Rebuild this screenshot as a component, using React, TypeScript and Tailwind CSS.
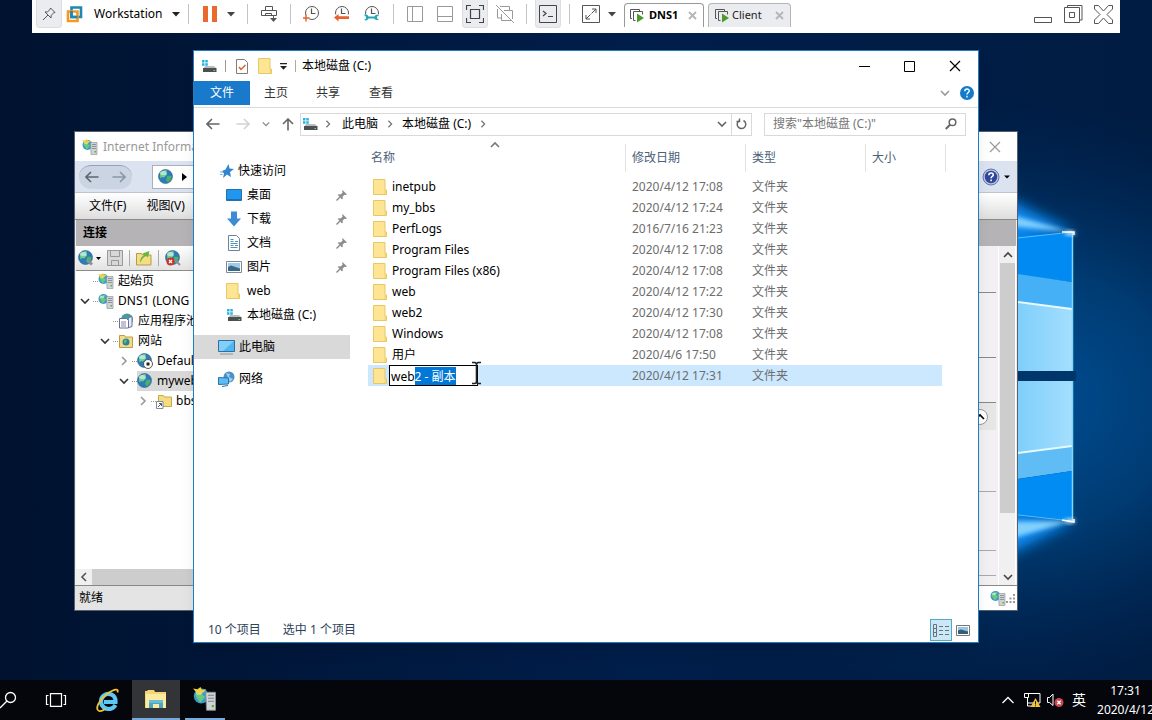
import { useEffect, useRef } from "react";
import type { ReactNode } from "react";

interface IconProps {
  className?: string;
}

function Caret({ className = "text-[#444]" }: IconProps) {
  return (
    <svg width="8" height="5" viewBox="0 0 8 5" className={`shrink-0 ${className}`}>
      <path d="M0 0h8L4 4.6z" fill="currentColor" />
    </svg>
  );
}

function Chevron({ className = "" }: IconProps) {
  return (
    <svg
      width="10"
      height="10"
      viewBox="0 0 10 10"
      fill="none"
      stroke="currentColor"
      className={`shrink-0 ${className}`}
    >
      <path d="M1 3l4 4 4-4" strokeWidth="1.6" />
    </svg>
  );
}

function CloseIcon({ size = 12 }: { size?: number }) {
  return (
    <svg width={size} height={size} viewBox="0 0 12 12" stroke="currentColor" fill="none">
      <path d="M1 1l10 10M11 1L1 11" strokeWidth="1.2" />
    </svg>
  );
}

function TabCloseIcon() {
  return (
    <svg width="9" height="9" viewBox="0 0 9 9" stroke="currentColor" fill="none">
      <path d="M1 1l7 7M8 1L1 8" strokeWidth="1.8" />
    </svg>
  );
}

function FolderIcon() {
  return (
    <svg width="14" height="16" viewBox="0 0 14 16" className="shrink-0">
      <path d="M.5.5h11.5v10.500h1.500v4.500H.5z" fill="#fde593" stroke="#e8c765" />
      <path d="M11.500 15v-3.500h1.500V15z" fill="#f6d675" />
    </svg>
  );
}

function DriveIcon() {
  return (
    <svg width="16" height="14" viewBox="0 0 16 14" className="shrink-0">
      <path d="M1 1h2.5v2.5H1zM4.3 1h2.5v2.5H4.3zM1 4.3h2.5v2.5H1zM4.3 4.3h2.5v2.5H4.3z" fill="#27b5dc" />
      <path d="M4 7h9l2.5 2.5h-13z" fill="#b9bdc0" />
      <path d="M2 9h13.5v4H2z" fill="#4b5054" />
      <path d="M12.5 11h1.5v1h-1.5z" fill="#6fdc7a" />
    </svg>
  );
}

function Globe({ size = 16, children }: { size?: number; children?: ReactNode }) {
  return (
    <svg width={size} height={size} viewBox="0 0 16 16" className="shrink-0">
      <circle cx="7.5" cy="7.5" r="7" fill="#2b7cb8" stroke="#2b5f80" strokeWidth=".6" />
      <path d="M2 4.5C4 1.500 7 .8 9 1.500L7.500 4l1.500 1.500L6 8.500 4 8 2.500 9.500z" fill="#74d08c" />
      <path d="M9.500 6.500l4 .5c0 3-1.500 5-3.500 6.500L8 11z" fill="#4bb06c" />
      <ellipse cx="5.500" cy="4" rx="3.500" ry="2" fill="#e0f8fa" opacity=".6" />
      {children}
    </svg>
  );
}

function ServerIcon({ size = 16, star = true }: { size?: number; star?: boolean }) {
  return (
    <svg width={size} height={size} viewBox="0 0 16 16" className="shrink-0">
      <circle cx="5.500" cy="6" r="5" fill="#3a9bcb" />
      <path d="M1.500 5C3 2 6 1.500 7.500 2.500L6 5l2 1.500L5 10.500 3 8z" fill="#6cc97a" />
      <ellipse cx="4" cy="4" rx="2" ry="1.200" fill="#e0f8fa" opacity=".6" />
      {star && <path d="M0 1l3 .5L5 0l1 2 3-.5-2 2-4 1z" fill="#f5cf3d" />}
      <path d="M8.500 3.500h6.500V15.500H9z" fill="#ced3d5" stroke="#858d90" strokeWidth=".6" />
      <path d="M10 5.500h4M10 7.500h4M10 9.500h4" stroke="#7c8487" strokeWidth=".8" />
      <path d="M12.500 12h1.500v1.500h-1.500z" fill="#69a83c" />
    </svg>
  );
}

function PinIcon() {
  return (
    <svg width="11" height="11" viewBox="0 0 11 11" className="shrink-0 text-[#8c8c8c]">
      <path d="M6.500 0L11 4.500l-1.200.5L8.500 4.700 6.500 6.700l.3 2L6 9.500 1.800 5l.8-.8 2 .3 2-2L6.200 1z" fill="currentColor" />
      <path d="M4 7L.5 10.500" stroke="currentColor" strokeWidth="1.400" />
    </svg>
  );
}

function StarIcon() {
  return (
    <svg width="14" height="14" viewBox="0 0 14 14" className="shrink-0">
      <path d="M8.500 0l1 4.500L14 5l-4 3 1 5-4-2.500L3 14l1-4.500L2 7l3.500-1.500z" fill="#2f86cf" />
      <path d="M0 8h3M0 10.500h2.500" stroke="#6fb1e4" />
    </svg>
  );
}

function DesktopIcon() {
  return (
    <svg width="16" height="12" viewBox="0 0 16 12" className="shrink-0">
      <path d="M.5.5h15v11H.5z" fill="#2196ef" stroke="#2472ad" />
      <path d="M1 10h14v1H1z" fill="#156fbd" />
    </svg>
  );
}

function DownloadIcon() {
  return (
    <svg width="16" height="16" viewBox="0 0 16 16" className="shrink-0">
      <path d="M5 .5h6v7h4L8 15.500 1 7.500h4z" fill="#3c8bd4" />
    </svg>
  );
}

function DocumentIcon() {
  return (
    <svg width="16" height="16" viewBox="0 0 16 16" className="shrink-0">
      <path d="M2.500.5h8l3 3v12h-11z" fill="#fff" stroke="#6d8494" />
      <path d="M4.500 4.500h3M9 6.500h3M4.500 6.500h3M4.500 8.500h7M4.500 10.500h3M9 10.500h3M4.500 12.500h7" stroke="#4c90bf" />
    </svg>
  );
}

function PictureIcon() {
  return (
    <svg width="16" height="12" viewBox="0 0 16 12" className="shrink-0">
      <path d="M.5.5h15v11H.5z" fill="#fff" stroke="#7f8b94" />
      <path d="M2 2h12v8H2z" fill="#9fcbe8" />
      <path d="M2 6l3-1.500 9 3V10H2z" fill="#3c6888" />
    </svg>
  );
}

function ComputerIcon() {
  return (
    <svg width="17" height="15" viewBox="0 0 17 15" className="shrink-0">
      <path d="M.5.5h16v11H.5z" fill="#4fb5f3" stroke="#2c6fa0" />
      <path d="M1 1h15L5 11H1z" fill="#83cff8" />
      <path d="M2 14h13" stroke="#8195a3" />
    </svg>
  );
}

function NetworkIcon() {
  return (
    <svg width="17" height="16" viewBox="0 0 17 16" className="shrink-0">
      <circle cx="11" cy="6" r="5.500" fill="#4f91c5" />
      <path d="M8 2l4 1-1 3 4 2-3 3z" fill="#9fd0ee" />
      <path d="M.5 6.500l10 .5v6l-10 .5z" fill="#5dbcf5" stroke="#2d74a8" />
      <path d="M4 15.500l6-1" stroke="#2d74a8" />
    </svg>
  );
}

function Divider({ className = "" }: IconProps) {
  return <div className={`h-5 w-px shrink-0 bg-[#c4c4c4] ${className}`} />;
}

function ClockIcon({ badge }: { badge: "add" | "revert" | "manage" }) {
  return (
    <svg width="18" height="18" viewBox="0 0 18 18" fill="none" className="shrink-0">
      <circle cx="9" cy="8" r="6.500" stroke="#555" />
      <path d="M8.500 3.500V8.500h4" stroke="#555" strokeWidth="1.200" />
      {badge === "add" && (
        <>
          <path d="M0 10h6v7H0z" fill="#fff" />
          <path d="M3 9.500v7M0 13h6.500" stroke="#e2622a" strokeWidth="1.400" />
        </>
      )}
      {badge === "revert" && (
        <>
          <path d="M0 9.500h18V18H0z" fill="#fff" />
          <path d="M1 12.500L5.500 9v2.200H16v2.800H5.500v2.500z" fill="#e8602c" />
        </>
      )}
      {badge === "manage" && (
        <>
          <path d="M0 9.500h18V18H0z" fill="#fff" />
          <path d="M1 10c2-1 4 0 4.500 1.500h6c1-2 3-2 4.500-1l-2 1v2l2 1c-2 1-4 .5-4.800-1H5.500C4.500 15.500 3 16 1 15l2-1.200v-2z" fill="#22a7b8" />
        </>
      )}
    </svg>
  );
}

function VmTabIcon() {
  return (
    <svg width="16" height="15" viewBox="0 0 16 15" fill="none" className="shrink-0">
      <path d="M3 10.500H1.500v-9h9V3" stroke="#555" />
      <path d="M6.500 12.500h-2v-9h9v3" stroke="#555" />
      <path d="M8 5.500l7 4.500-7 4.500z" fill="#4c9a2a" />
    </svg>
  );
}

function WorkstationBar() {
  return (
    <header className="relative z-30 mx-8 flex h-[33px] shrink-0 items-start bg-white">
      <div className="flex h-7 items-center">
        <button aria-label="Pin" className="ml-1 flex h-7 w-[26px] items-center justify-center rounded-b border border-t-0 border-[#dcdde2] bg-[#ebecf0]">
          <svg width="14" height="14" viewBox="0 0 14 14" fill="none" stroke="#555">
            <path d="M8.500 1l4.500 4.500-1.500.5-2.300 2.300L9 11 3 5l2.700-.2L8 2.500zM6 8L1 13" />
          </svg>
        </button>
        <svg width="17" height="17" viewBox="0 0 17 17" fill="none" strokeWidth="2.600" className="ml-1 shrink-0">
          <path d="M5.500 1.500h9.500v9.500H5.500z" stroke="#1f86b5" />
          <path d="M2 5.500h9.500V15H2z" stroke="#f19a1f" />
          <path d="M5.500 5v6h6" stroke="#1f86b5" />
        </svg>
        <button className="ml-[11px] flex w-[86px] items-center justify-between text-black">
          Workstation
          <Caret className="text-[#222]" />
        </button>
        <Divider className="ml-2" />
        <button aria-label="Suspend" className="ml-[14px] flex gap-1">
          <span className="h-4 w-[5px] bg-[#ea6a2c]" />
          <span className="h-4 w-[5px] bg-[#ea6a2c]" />
        </button>
        <button aria-label="Power options" className="ml-[10px]">
          <Caret />
        </button>
        <Divider className="ml-3" />
        <button aria-label="Send keys" className="ml-3">
          <svg width="18" height="18" viewBox="0 0 18 18" fill="none" stroke="#555">
            <path d="M5.500 5.500v-4h7v4M1.500 5.500h15v5h-15zM5.500 10.500v-2h6v2M13.500 10.500v5" />
            <path d="M10 13h7l-3.500 4z" fill="#555" stroke="none" />
          </svg>
        </button>
        <Divider className="ml-3" />
        <div className="ml-3 flex gap-3">
          <button aria-label="Take snapshot"><ClockIcon badge="add" /></button>
          <button aria-label="Revert snapshot"><ClockIcon badge="revert" /></button>
          <button aria-label="Manage snapshots"><ClockIcon badge="manage" /></button>
        </div>
        <Divider className="ml-3" />
        <button aria-label="Show library" className="ml-[13px]">
          <svg width="16" height="16" viewBox="0 0 16 16" fill="none" stroke="#999">
            <path d="M.5.5h15v15H.5zM5.500.5v15" />
          </svg>
        </button>
        <button aria-label="Show thumbnails" className="ml-[14px]">
          <svg width="16" height="16" viewBox="0 0 16 16" fill="none" stroke="#999">
            <path d="M.5.500h15v15H.5zM.5 10.500h15" />
          </svg>
        </button>
        <button aria-label="Full screen" className="ml-[9px] flex h-7 w-[26px] items-center justify-center rounded-b border border-t-0 border-[#dcdde2] bg-[#ebecf0]">
          <svg width="18" height="18" viewBox="0 0 18 18" fill="none" stroke="#444">
            <path d="M.500 5V.5H5M13 .5h4.500V5M17.500 13v4.500H13M5 17.500H.5V13M4.500 4.500h9v9h-9z" strokeWidth="1.200" />
          </svg>
        </button>
        <button aria-label="Unity" className="ml-2">
          <svg width="18" height="18" viewBox="0 0 18 18" fill="none" stroke="#999">
            <path d="M4 1.500h9.500V5M1.500 4v9H5M5.500 9v6.500h9.500M8 5.500h8.500V14M0 0l18 18" />
          </svg>
        </button>
        <Divider className="ml-3" />
        <button aria-label="Console view" className="ml-2 flex h-7 w-[26px] items-center justify-center rounded-b border border-t-0 border-[#dcdde2] bg-[#ebecf0]">
          <svg width="18" height="18" viewBox="0 0 18 18" fill="none" stroke="#444">
            <path d="M.5.5h17v17H.5z" />
            <path d="M4 6l3 2.500L4 11M9 11.500h5" strokeWidth="1.200" />
          </svg>
        </button>
        <Divider className="ml-2" />
        <button aria-label="Stretch" className="ml-3">
          <svg width="18" height="18" viewBox="0 0 18 18" fill="none" stroke="#555">
            <path d="M.5.5h17v17H.5zM4 10v4h4M10 4h4v4M4 14l4.500-4.500M14 4L9.500 8.500" />
          </svg>
        </button>
        <button aria-label="Stretch options" className="ml-2">
          <Caret />
        </button>
      </div>
      <div className="ml-2 flex gap-1 pt-[3px]">
        <div className="flex h-6 w-20 items-center rounded-t border border-b-0 border-[#999] bg-white pl-1">
          <VmTabIcon />
          <button className="ml-1 text-[11px] font-bold text-black">DNS1</button>
          <button aria-label="Close DNS1" className="ml-auto mr-1.5 text-[#b5b5b5]">
            <TabCloseIcon />
          </button>
        </div>
        <div className="flex h-6 w-[83px] items-center rounded-t border border-b-0 border-[#b5b5b5] bg-[#ebecf0] pl-[5px]">
          <VmTabIcon />
          <button className="ml-0.5 text-[11px] text-[#222]">Client</button>
          <button aria-label="Close Client" className="ml-auto mr-1.5 text-[#b5b5b5]">
            <TabCloseIcon />
          </button>
        </div>
      </div>
      <div className="ml-auto flex h-7 items-center gap-[11px] pr-[7px] text-[#555]">
        <button aria-label="Minimize">
          <svg width="19" height="19" viewBox="0 0 19 19" fill="none" stroke="currentColor">
            <path d="M.5 12.500h17v5H.5z" />
          </svg>
        </button>
        <button aria-label="Restore">
          <svg width="19" height="19" viewBox="0 0 19 19" fill="none" stroke="currentColor">
            <path d="M.5 2.500h15v15H.5zM3.500 2.500v-2h14.500V15h-2.500M5.500 7.500h5v5h-5z" />
          </svg>
        </button>
        <button aria-label="Close">
          <svg width="19" height="19" viewBox="0 0 19 19" fill="none" stroke="currentColor">
            <path d="M.5.500h4l5 5.500 5-5.500h4v3.500L13 9.500l5.500 5.500v3.500h-4l-5-5.500-5 5.500h-4V15L6 9.500.5 4z" />
          </svg>
        </button>
      </div>
    </header>
  );
}

function Wallpaper() {
  return (
    <svg className="absolute inset-0 h-full w-full" viewBox="0 0 1152 720" preserveAspectRatio="none">
      <defs>
        <linearGradient id="base" x1="0" x2="1">
          <stop offset="0" stopColor="#00122f" />
          <stop offset=".55" stopColor="#001e4a" />
          <stop offset="1" stopColor="#001c42" />
        </linearGradient>
        <radialGradient id="glow" cx="0" cy="0" r="1" gradientUnits="userSpaceOnUse" gradientTransform="translate(1000 400) scale(400 300)">
          <stop offset="0" stopColor="#00529c" />
          <stop offset=".45" stopColor="#003f78" stopOpacity=".9" />
          <stop offset="1" stopColor="#002a5a" stopOpacity="0" />
        </radialGradient>
        <linearGradient id="pane" x1="0" x2="1">
          <stop offset="0" stopColor="#78cdfb" />
          <stop offset="1" stopColor="#a5defe" />
        </linearGradient>
        <filter id="soft" x="-30%" y="-60%" width="160%" height="220%">
          <feGaussianBlur stdDeviation="7" />
        </filter>
        <filter id="beam" x="-30%" y="-60%" width="160%" height="220%">
          <feGaussianBlur stdDeviation="2" />
        </filter>
      </defs>
      <path d="M0 0h1152v720H0z" fill="url(#base)" />
      <path d="M0 0h1152v720H0z" fill="url(#glow)" />
      <path d="M950 170l124 62-124 24zM950 585l124-64-124-24z" fill="#0a8cf5" filter="url(#soft)" />
      <path d="M1010 236l62-3v49l-62-8z" fill="#008af2" />
      <path d="M1010 273l62 9v27l-62-8z" fill="#45b0f6" />
      <path d="M1010 301l62 8v62h-62z" fill="url(#pane)" />
      <path d="M1010 371h66v10h-66z" fill="#00366a" />
      <path d="M1010 381h62v66l-62 7z" fill="url(#pane)" />
      <path d="M1010 454l62-8v25l-62 9z" fill="#5fbcf5" />
      <path d="M1010 480l62-9v49l-62-6z" fill="#008cf2" />
      <path d="M1000 212l72 20-72-7zM1000 542l72-21-72 1z" fill="#9fe2ff" opacity=".8" filter="url(#beam)" />
      <path d="M1018 238l54-6M1010 514l62 7" stroke="#4cc0ff" />
      <path d="M1010 301l62 8M1010 454l62-8" stroke="#e6f9ff" strokeWidth="2" />
      <path d="M1072.500 232v139M1072.500 381v140" stroke="#7ed8f8" strokeWidth="1.500" />
      <ellipse cx="1070" cy="233" rx="5" ry="2" fill="#f2fdff" filter="url(#beam)" />
      <ellipse cx="1070" cy="521" rx="5" ry="2" fill="#f2fdff" filter="url(#beam)" />
      <path d="M1062 232l12 0v3M1062 520l12 2v-3" stroke="#fff" fill="none" strokeWidth="1.500" />
    </svg>
  );
}

interface TreeRowProps {
  label: string;
  icon: ReactNode;
  indent: string;
  state?: "open" | "closed";
  selected?: boolean;
}

function TreeRow({ label, icon, indent, state, selected }: TreeRowProps) {
  return (
    <li className={`flex h-5 items-center ${indent}`}>
      <span className="flex w-[13px] shrink-0 items-center">
        {state === "open" && <Chevron className="text-[#333]" />}
        {state === "closed" && <Chevron className="-rotate-90 text-[#999]" />}
      </span>
      <span className="w-[5px] shrink-0 border-t border-dotted border-[#999]" />
      <button className={`flex h-full grow items-center gap-1 whitespace-nowrap text-black ${selected ? "bg-[#d9d9d9]" : ""}`}>
        {icon}
        {label}
      </button>
    </li>
  );
}

function IisWindow() {
  return (
    <section className="absolute top-[131px] right-[134px] bottom-[109px] left-[74px] flex flex-col overflow-hidden border border-[#56606c] bg-[#f0f0f0]">
      <div className="flex h-[29px] shrink-0 items-center bg-white pr-4 pl-[7px] text-[#999]">
        <ServerIcon />
        <h2 className="ml-[5px] grow">Internet Information Services</h2>
        <button aria-label="Close manager">
          <CloseIcon />
        </button>
      </div>
      <div className="flex h-8 shrink-0 items-center border-b border-[#c0c4cc] bg-[#dce3f0] pr-[7px] pl-1">
        <div className="flex h-6 w-[53px] items-center justify-between rounded-full border-t border-[#97a3b5] bg-[#cbd4e3] px-1.5 text-[#8b97a5]">
          <button aria-label="Back" className="text-[#5d6773]">
            <ArrowIcon />
          </button>
          <button aria-label="Forward" className="rotate-180">
            <ArrowIcon />
          </button>
        </div>
        <div className="mx-5 flex h-6 grow items-center gap-2 border border-[#a8b0bd] bg-white pl-[5px]">
          <Globe />
          <svg width="5" height="8" viewBox="0 0 5 8">
            <path d="M0 0l5 4-5 4z" fill="#000" />
          </svg>
        </div>
        <button aria-label="Manager help" className="flex items-center gap-1">
          <svg width="18" height="18" viewBox="0 0 18 18" className="text-[#2e469c]">
            <circle cx="9" cy="9" r="8" fill="#b9c4e4" stroke="#6675a8" />
            <circle cx="9" cy="9" r="6.200" fill="currentColor" />
            <path d="M6.800 7.300c0-3 4.500-3 4.500-.3 0 1.500-2.200 1.500-2.200 3.300M9.100 11.600v1.600" fill="none" stroke="#fff" strokeWidth="1.600" />
          </svg>
          <svg width="6" height="4" viewBox="0 0 6 4">
            <path d="M0 .500h6L3 3.500z" fill="#000" />
          </svg>
        </button>
      </div>
      <nav className="flex h-[27px] shrink-0 items-center gap-5 border-b border-[#888] bg-gradient-to-b from-white to-[#dedede] pl-3.5 text-black">
        <button>文件(F)</button>
        <button>视图(V)</button>
      </nav>
      <div className="mx-px flex min-h-0 grow">
        <aside className="flex w-52 shrink-0 flex-col border-r border-[#888] bg-white">
          <h3 className="flex h-[26px] shrink-0 items-center bg-[#b5b3b5] pl-[7px] font-bold text-black">连接</h3>
          <div className="flex h-[25px] shrink-0 items-center border-b border-[#8c8c8c] bg-gradient-to-b from-white to-[#e3e3e3]">
            <button aria-label="Connect" className="flex items-center gap-0.5 pl-0.5">
              <Globe>
                <path d="M9 10l5 4.500" stroke="#8a8f93" strokeWidth="3" />
              </Globe>
              <svg width="5" height="3" viewBox="0 0 5 3">
                <path d="M0 0h5L2.500 3z" fill="#000" />
              </svg>
            </button>
            <button aria-label="Save" className="ml-1.5">
              <svg width="16" height="16" viewBox="0 0 16 16" fill="#d8d8d8" stroke="#999">
                <path d="M.5.500h15v15H.5zM3.500.500h9v6h-9zM4.500 10.500h7v5h-7z" />
              </svg>
            </button>
            <div className="mx-1.5 h-4 w-px bg-[#aaa]" />
            <button aria-label="Up one level">
              <svg width="16" height="16" viewBox="0 0 16 16">
                <path d="M.5 3.500h5l1 1.500h8.500v10H.5z" fill="#f3de86" stroke="#b59b45" />
                <path d="M4 13c0-4 1-6.500 4-7.500L6.500 3.500l7-2.500-1.500 6.500-1.800-1.500C7 7 6 9.500 4 13z" fill="#6cb53c" />
              </svg>
            </button>
            <div className="mx-1.5 h-4 w-px bg-[#aaa]" />
            <button aria-label="Disconnect">
              <Globe>
                <path d="M10 10l5 5" stroke="#8a8f93" strokeWidth="2" />
                <circle cx="5.500" cy="11.500" r="4" fill="#c8342e" />
                <path d="M4 10l3 3M7 10l-3 3" stroke="#fff" strokeWidth="1.200" />
              </Globe>
            </button>
          </div>
          <ul className="min-h-0 grow overflow-hidden">
            <TreeRow label="起始页" indent="pl-1" icon={<ServerIcon />} />
            <TreeRow label="DNS1 (LONG" indent="pl-1" state="open" icon={<ServerIcon star={false} />} />
            <TreeRow
              label="应用程序池"
              indent="pl-6"
              icon={
                <svg width="16" height="16" viewBox="0 0 16 16" className="shrink-0">
                  <circle cx="9" cy="6.500" r="6" fill="#4a9c9c" />
                  <path d="M1.500 5.500h7l2 2v7.500h-9z" fill="#fff" stroke="#67719e" />
                  <path d="M3 9h5M3 11h5M3 13h5" stroke="#8f7fae" />
                  <path d="M11 4.500l3-1v10l-3 1" fill="#e8eef4" stroke="#67719e" />
                </svg>
              }
            />
            <TreeRow
              label="网站"
              indent="pl-6"
              state="open"
              icon={
                <svg width="16" height="16" viewBox="0 0 16 16" className="shrink-0">
                  <path d="M1.500 2.500h5l1 1.500h7v10.500h-13z" fill="#f2dd86" stroke="#b89c45" />
                  <circle cx="8" cy="9" r="3.500" fill="#2b7fa6" />
                  <path d="M5.500 8L8 6l1 2-2 3z" fill="#61bb5e" />
                </svg>
              }
            />
            <TreeRow
              label="Default"
              indent="pl-[43px]"
              state="closed"
              icon={
                <Globe>
                  <circle cx="11" cy="11" r="4.500" fill="#fff" stroke="#555" />
                  <path d="M9.500 9.500h3v3h-3z" fill="#222" />
                </Globe>
              }
            />
            <TreeRow label="myweb" indent="pl-[43px]" state="open" selected icon={<Globe />} />
            <TreeRow
              label="bbs"
              indent="pl-[62px]"
              state="closed"
              icon={
                <svg width="16" height="16" viewBox="0 0 16 16" className="shrink-0">
                  <path d="M2.500 2.500h5l1 1.500h7v9.500h-13z" fill="#f5dc82" stroke="#c9a84a" />
                  <path d="M.5 8.500h6.500v7H.5z" fill="#fff" stroke="#888" />
                  <path d="M2 14l3-3M3 10.500h2.500V13" fill="none" stroke="#2b5fa5" />
                </svg>
              }
            />
          </ul>
          <div className="flex h-4 shrink-0 bg-[#cdcdcd]">
            <button aria-label="Scroll left" className="flex w-4 items-center justify-center bg-[#f0f0f0] text-[#555]">
              <Chevron className="rotate-90" />
            </button>
          </div>
        </aside>
        <main className="flex min-w-0 grow flex-col bg-[#f2f0f2]">
          <div className="h-[26px] shrink-0 bg-[#b5b3b5]" />
          <div className="flex min-h-0 grow">
            <div className="mr-px min-w-0 grow border-r border-white">
              <div className="mr-0.5 h-[47px] border-b border-[#888]" />
              <div className="mr-0.5 h-[65px] border-b border-[#888]" />
              <div className="mr-0.5 h-[45px] border-b border-[#888]" />
              <div className="mr-0.5 flex h-[27px] items-center justify-end bg-[#e6e6e6] pr-2">
                <button aria-label="Collapse" className="flex size-4 items-center justify-center rounded-full border border-[#999] bg-white">
                  <Chevron className="rotate-180" />
                </button>
              </div>
              <div className="mr-0.5 h-[62px] border-b border-[#aaa]" />
              <div className="mr-0.5 h-[59px] border-b border-[#aaa]" />
              <div className="mr-0.5 h-[25px] border-b border-[#aaa]" />
            </div>
            <div className="flex w-4 shrink-0 flex-col items-center border-r border-white bg-[#f0f0f0] text-[#444]">
              <div className="flex h-[17px] items-center">
                <Chevron className="rotate-180" />
              </div>
              <div className="h-[250px] w-full bg-[#cdcdcd]" />
              <div className="mt-auto flex h-[17px] items-center">
                <Chevron />
              </div>
            </div>
          </div>
        </main>
      </div>
      <footer className="flex h-[25px] shrink-0 items-center justify-between border-t border-[#888] bg-[#e4e4e4] pl-1 text-black">
        就绪
        <div className="flex h-full w-40 items-center justify-end bg-white pr-0.5">
          <ServerIcon star={false} />
          <svg width="9" height="9" viewBox="0 0 9 9" fill="#999">
            <path d="M7 0h2v2H7zM3.500 3.500h2v2h-2zM7 3.500h2v2H7zM0 7h2v2H0zM3.500 7h2v2h-2zM7 7h2v2H7z" />
          </svg>
        </div>
      </footer>
    </section>
  );
}

function ArrowIcon() {
  return (
    <svg width="14" height="12" viewBox="0 0 14 12" fill="none" stroke="currentColor" strokeWidth="1.600">
      <path d="M13.500 6H1.500M6 1L1 6l5 5" />
    </svg>
  );
}

const shortcuts = [
  { label: "桌面", icon: <DesktopIcon />, pinned: true },
  { label: "下载", icon: <DownloadIcon />, pinned: true },
  { label: "文档", icon: <DocumentIcon />, pinned: true },
  { label: "图片", icon: <PictureIcon />, pinned: true },
  { label: "web", icon: <FolderIcon />, pinned: false },
  { label: "本地磁盘 (C:)", icon: <DriveIcon />, pinned: false },
];

const files = [
  { name: "inetpub", date: "2020/4/12 17:08" },
  { name: "my_bbs", date: "2020/4/12 17:24" },
  { name: "PerfLogs", date: "2016/7/16 21:23" },
  { name: "Program Files", date: "2020/4/12 17:08" },
  { name: "Program Files (x86)", date: "2020/4/12 17:08" },
  { name: "web", date: "2020/4/12 17:22" },
  { name: "web2", date: "2020/4/12 17:30" },
  { name: "Windows", date: "2020/4/12 17:08" },
  { name: "用户", date: "2020/4/6 17:50" },
];

function FileTable() {
  const renameRef = useRef<HTMLInputElement>(null);

  useEffect(() => {
    const input = renameRef.current;
    if (!input) return;
    input.focus();
    input.setSelectionRange(3, input.value.length);
  }, []);

  return (
    <table className="w-[574px] table-fixed border-collapse text-left text-[#6d6d6d]">
      <thead>
        <tr className="h-9 text-[#4c607a]">
          <th className="relative p-0 pl-[3px] font-normal">
            名称
            <Chevron className="absolute top-0 left-[122px] rotate-180 text-[#777]" />
          </th>
          <th className="w-[120px] p-0 font-normal">
            <div className="flex h-7 items-center border-l border-[#e2e2e2] pl-1.5">修改日期</div>
          </th>
          <th className="w-[120px] p-0 font-normal">
            <div className="flex h-7 items-center border-l border-[#e2e2e2] pl-1.5">类型</div>
          </th>
          <th className="w-[77px] p-0 font-normal">
            <div className="-mr-1 flex h-7 items-center border-x border-[#e2e2e2] pl-1.5">大小</div>
          </th>
        </tr>
      </thead>
      <tbody>
        {files.map((file) => (
          <tr key={file.name} className="h-[21px]">
            <td className="p-0 pl-[5px]">
              <div className="flex items-center gap-[5px] text-black">
                <FolderIcon />
                {file.name}
              </div>
            </td>
            <td className="p-0 pl-[7px]">{file.date}</td>
            <td className="p-0 pl-[7px]">文件夹</td>
            <td className="p-0" />
          </tr>
        ))}
        <tr className="h-[21px] bg-[#cce8ff]">
          <td className="p-0 pl-[5px]">
            <div className="relative flex items-center gap-0.5">
              <FolderIcon />
              <input
                ref={renameRef}
                aria-label="重命名"
                defaultValue="web2 - 副本"
                className="h-[21px] w-[89px] border border-black bg-white px-px text-black outline-none selection:bg-[#0078d7] selection:text-white"
              />
              <svg width="9" height="24" viewBox="0 0 9 24" fill="none" className="absolute -top-1 left-[99px]">
                <path d="M0 1.500h3l1.500 1 1.500-1h3M4.500 2.500v19M0 22.500h3l1.500-1 1.500 1h3" stroke="#222" strokeWidth="1.600" />
              </svg>
            </div>
          </td>
          <td className="p-0 pl-[7px]">2020/4/12 17:31</td>
          <td className="p-0 pl-[7px]">文件夹</td>
          <td className="p-0" />
        </tr>
      </tbody>
    </table>
  );
}

function ExplorerWindow() {
  return (
    <section className="absolute top-[50px] right-[173px] bottom-[77px] left-[193px] z-10 flex flex-col border border-[#1c7fc0] bg-white text-black shadow-lg">
      <div className="flex h-[30px] shrink-0 items-center pr-[17px] pl-[7px]">
        <DriveIcon />
        <div className="ml-2 h-3 w-px bg-[#999]" />
        <button aria-label="Properties" className="ml-2.5">
          <svg width="12" height="15" viewBox="0 0 12 15" fill="none">
            <path d="M.5.500h8l3 3v11H.5z" fill="#fff" stroke="#7d7d7d" />
            <path d="M3 8l2 2.500L9.500 6" stroke="#d9622b" strokeWidth="1.500" />
          </svg>
        </button>
        <button aria-label="New folder" className="ml-2.5">
          <FolderIcon />
        </button>
        <button aria-label="Customize toolbar" className="ml-2">
          <svg width="7" height="7" viewBox="0 0 7 7">
            <path d="M0 0h7v1.200H0zM0 3h7L3.500 6.800z" fill="#222" />
          </svg>
        </button>
        <div className="ml-2 h-3 w-px bg-[#aaa]" />
        <h1 className="ml-1.5 grow">本地磁盘 (C:)</h1>
        <div className="flex items-center gap-[34px]">
          <button aria-label="最小化">
            <svg width="11" height="11" viewBox="0 0 11 11" stroke="#000">
              <path d="M0 5.500h11" />
            </svg>
          </button>
          <button aria-label="最大化">
            <svg width="11" height="11" viewBox="0 0 11 11" fill="none" stroke="#000">
              <path d="M.5.500h10v10H.5z" />
            </svg>
          </button>
          <button aria-label="关闭">
            <CloseIcon />
          </button>
        </div>
      </div>
      <div className="flex h-[27px] shrink-0 items-start border-b border-[#dadbdc] pr-1 text-[#333]">
        <button className="h-6 w-14 bg-[#1979ca] text-white">文件</button>
        <button className="ml-3.5 h-6">主页</button>
        <button className="ml-7 h-6">共享</button>
        <button className="ml-[29px] h-6">查看</button>
        <button aria-label="展开功能区" className="ml-auto flex h-6 items-center text-[#999]">
          <Chevron />
        </button>
        <button aria-label="帮助" className="ml-2.5 flex h-6 items-center">
          <svg width="14" height="14" viewBox="0 0 14 14">
            <circle cx="7" cy="7" r="7" fill="#137bc9" />
            <path d="M4.800 5.300c0-3 4.500-3 4.500-.3C9.300 6.500 7 6.500 7 8.500M7 9.800v1.700" fill="none" stroke="#fff" strokeWidth="1.400" />
          </svg>
        </button>
      </div>
      <div className="flex h-8 shrink-0 items-center pr-3 pl-3">
        <button aria-label="后退" className="text-[#666]">
          <ArrowIcon />
        </button>
        <button aria-label="前进" className="ml-4 rotate-180 text-[#d4d4d4]">
          <ArrowIcon />
        </button>
        <button aria-label="最近位置" className="ml-3 text-[#888]">
          <Chevron className="size-2" />
        </button>
        <button aria-label="上移" className="ml-3 text-[#666]">
          <svg width="12" height="13" viewBox="0 0 12 13" fill="none" stroke="currentColor" strokeWidth="1.600">
            <path d="M6 12.500V1.500M1 6l5-5 5 5" />
          </svg>
        </button>
        <div className="ml-1.5 flex h-[23px] grow items-center border border-[#d9d9d9] pl-px">
          <DriveIcon />
          <Chevron className="mx-1.5 size-2 -rotate-90 text-[#777]" />
          <button className="ml-1">此电脑</button>
          <Chevron className="mx-2 size-2 -rotate-90 text-[#777]" />
          <button>本地磁盘 (C:)</button>
          <Chevron className="mx-2 size-2 -rotate-90 text-[#777]" />
          <button aria-label="历史记录" className="mr-1 ml-auto text-[#666]">
            <Chevron />
          </button>
          <button aria-label="刷新" className="flex h-full w-5 items-center justify-center border-l border-[#d9d9d9]">
            <svg width="11" height="12" viewBox="0 0 11 12" fill="none" stroke="#666" strokeWidth="1.500">
              <path d="M7.500 2.500a4.300 4.300 0 1 1-4.500.3M3.500 .500v3H.5" />
            </svg>
          </button>
        </div>
        <label className="ml-3 flex h-[23px] w-[202px] items-center border border-[#d9d9d9] pr-2 pl-2">
          <input
            type="search"
            aria-label="搜索"
            placeholder={'搜索"本地磁盘 (C:)"'}
            className="w-full min-w-0 grow placeholder:text-[#777]"
          />
          <svg width="12" height="12" viewBox="0 0 12 12" fill="none" stroke="#666" strokeWidth="1.500" className="shrink-0">
            <circle cx="7.500" cy="4.300" r="3.300" />
            <path d="M5 6.800L.8 11" strokeWidth="2" />
          </svg>
        </label>
      </div>
      <div className="flex min-h-0 grow">
        <nav className="w-[156px] shrink-0 pt-[19px]">
          <a href="#quick" className="flex h-6 items-center gap-1 pl-[26px]">
            <StarIcon />
            快速访问
          </a>
          {shortcuts.map((item) => (
            <a key={item.label} href="#folder" className="flex h-6 items-center pr-[3px] pl-8">
              <span className="flex w-[21px] shrink-0 items-center">{item.icon}</span>
              <span className="grow">{item.label}</span>
              {item.pinned && <PinIcon />}
            </a>
          ))}
          <a href="#computer" className="mt-2 flex h-6 items-center gap-1 bg-[#d9d9d9] pl-6">
            <ComputerIcon />
            此电脑
          </a>
          <a href="#network" className="mt-2 flex h-6 items-center gap-1 pl-6">
            <NetworkIcon />
            网络
          </a>
        </nav>
        <div className="min-w-0 grow pl-[18px]">
          <FileTable />
        </div>
      </div>
      <footer className="flex h-6 shrink-0 items-center pr-2 pl-3.5 text-[#2d4258]">
        <span>10 个项目</span>
        <span className="ml-[22px]">选中 1 个项目</span>
        <button aria-label="详细信息" className="ml-auto flex h-[22px] w-[22px] items-center justify-center border border-[#4fa9c9] bg-[#cce8f6]">
          <svg width="16" height="13" viewBox="0 0 16 13" fill="none" stroke="#66737d">
            <path d="M.5.500h3v12h-3zM.5 4.500h3M.5 8.500h3M6 2.500h4M6 6.500h4M6 10.500h4M12 2.500h4M12 6.500h4M12 10.500h4" />
          </svg>
        </button>
        <button aria-label="大图标" className="ml-1">
          <svg width="14" height="11" viewBox="0 0 14 11">
            <path d="M.5.500h13v10H.5z" fill="#fff" stroke="#777" />
            <path d="M2 2h10v7H2z" fill="#9cc4de" />
            <path d="M2 5.500l3-1 7 2V9H2z" fill="#335d7b" />
          </svg>
        </button>
      </footer>
    </section>
  );
}

function Taskbar() {
  return (
    <footer className="relative z-20 mt-auto flex h-10 shrink-0 items-center overflow-hidden bg-[#04060b] text-white">
      <button aria-label="搜索 Windows">
        <svg width="17" height="18" viewBox="0 0 17 18" fill="none" stroke="#fff" strokeWidth="1.300">
          <circle cx="10.500" cy="6.500" r="5" />
          <path d="M7 10L0 17" />
        </svg>
      </button>
      <button aria-label="任务视图" className="ml-7">
        <svg width="22" height="14" viewBox="0 0 22 14" fill="none" stroke="#fff" strokeWidth="1.200">
          <path d="M5.500.600h11v12.800h-11zM3.500 2.500h-2v9h2M18.500 2.500h2v9h-2" />
        </svg>
      </button>
      <button aria-label="Internet Explorer" className="ml-7">
        <svg width="25" height="25" viewBox="0 0 25 25" fill="none">
          <path d="M20.500 17c-2.500 4.500-8 5-11.500 2.500-4-3-4-9 0-12 4.500-3.300 12-1 11.500 6.500H9" stroke="#5cc8f5" strokeWidth="4.200" />
          <path d="M4 23c-5-2 1-12 8-17S24 0 22.500 4.500M4 23c2 .5 4-.5 6-2" stroke="#f2c531" strokeWidth="1.800" />
        </svg>
      </button>
      <button aria-label="文件资源管理器" className="ml-3 flex h-10 w-12 items-center justify-center border-b-2 border-[#76a9dc] bg-[#333437]">
        <svg width="22" height="20" viewBox="0 0 22 20">
          <path d="M0 2h2l1-1h6l1 2h11v16H0z" fill="#f5d675" />
          <path d="M1 5h20v14H1z" fill="#fce9a2" />
          <path d="M4 11h14v8h-4v-4H8v4H4z" fill="#4aa5c4" />
          <path d="M4 11h14v3H4z" fill="#66bdd4" />
        </svg>
      </button>
      <button aria-label="IIS 管理器" className="ml-[5px] flex h-10 w-10 items-center justify-center border-b-2 border-[#76a9dc]">
        <ServerIcon size={24} />
      </button>
      <div className="ml-auto flex shrink-0 items-center">
        <button aria-label="显示隐藏的图标">
          <svg width="12" height="8" viewBox="0 0 12 8" fill="none" stroke="#fff" strokeWidth="1.300">
            <path d="M.5 7L6 1.500 11.500 7" />
          </svg>
        </button>
        <button aria-label="网络状态" className="ml-2.5">
          <svg width="17" height="15" viewBox="0 0 17 15" fill="none" stroke="#fff">
            <path d="M3.500.500h12.500v9.500H3.500V5M.5 .500h4v4h-4zM3.500 10v3h4" />
            <path d="M11.500 5l5 9h-10z" fill="#f4c534" stroke="none" />
            <path d="M11.500 8v3.500M11.500 12.300v1" stroke="#222" />
          </svg>
        </button>
        <button aria-label="音量" className="ml-1.5">
          <svg width="17" height="14" viewBox="0 0 17 14" fill="none">
            <path d="M.5 4.500h2l3.500-3.500v11.500L2.500 9.500h-2z" stroke="#fff" />
            <circle cx="12" cy="9.500" r="4.500" fill="#c9454c" />
            <path d="M10.300 7.800l3.400 3.400M13.700 7.800l-3.400 3.400" stroke="#fff" strokeWidth="1.300" />
          </svg>
        </button>
        <button className="ml-2 text-sm">英</button>
        <button className="-mr-0.5 ml-[11px] text-center leading-[19px] whitespace-nowrap">
          17:31
          <br />
          2020/4/12
        </button>
      </div>
    </footer>
  );
}

export default function App() {
  return (
    <div className="relative flex h-screen flex-col overflow-hidden bg-[#00132f] font-['Noto_Sans','Noto_Sans_CJK_SC',sans-serif] text-xs">
      <Wallpaper />
      <WorkstationBar />
      <IisWindow />
      <ExplorerWindow />
      <Taskbar />
    </div>
  );
}
